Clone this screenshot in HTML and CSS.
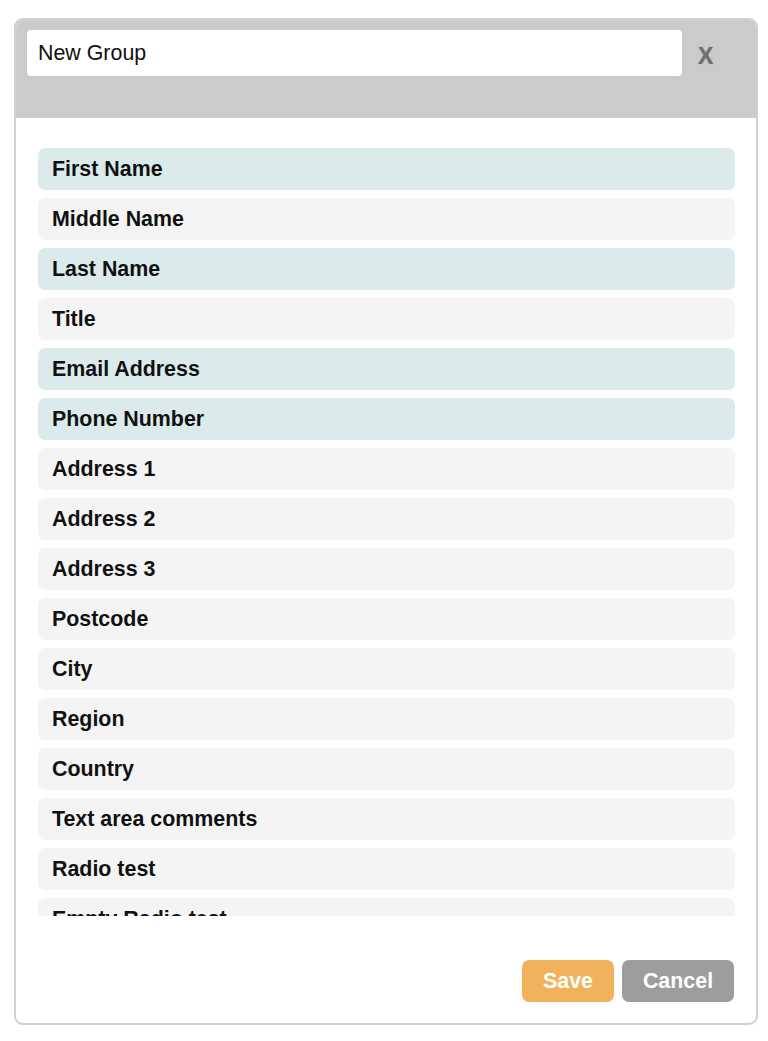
FILE: index.html
```html
<!DOCTYPE html>
<html lang="en">

<head>
    <meta charset="UTF-8">
    <meta name="viewport" content="width=device-width, initial-scale=1.0">
    <title>New Group</title>
    <link rel="stylesheet" href="styles.css">
</head>

<body>
    <div class="dialog">
        <!-- Cabecera: nombre del grupo y cerrar -->
        <div class="dialog-header">
            <input type="text" class="group-name" value="New Group">
            <span class="close">X</span>
        </div>

        <!-- Lista de campos -->
        <div class="field-list">
            <div class="field selected">First Name</div>
            <div class="field">Middle Name</div>
            <div class="field selected">Last Name</div>
            <div class="field">Title</div>
            <div class="field selected">Email Address</div>
            <div class="field selected">Phone Number</div>
            <div class="field">Address 1</div>
            <div class="field">Address 2</div>
            <div class="field">Address 3</div>
            <div class="field">Postcode</div>
            <div class="field">City</div>
            <div class="field">Region</div>
            <div class="field">Country</div>
            <div class="field">Text area comments</div>
            <div class="field">Radio test</div>
            <div class="field">Empty Radio test</div>
        </div>

        <!-- Botones -->
        <div class="actions">
            <button class="save">Save</button>
            <button class="cancel">Cancel</button>
        </div>
    </div>
</body>

</html>
```

FILE: styles.css
```css
body {
    font-family: "Liberation Sans", Arial, sans-serif;
    margin: 0;
    padding: 18px 10px 16px 14px;
    background: #fff;
}

.dialog {
    width: 744px;
    box-sizing: border-box;
    border: 2px solid #d0d0d0;
    border-radius: 9px;
    overflow: hidden;
    background: #fff;
}

.dialog-header {
    height: 98px;
    box-sizing: border-box;
    background: #cbcbcb;
    padding: 10px 0 0 11px;
    display: flex;
    align-items: flex-start;
}

.group-name {
    width: 655px;
    height: 46px;
    box-sizing: border-box;
    border: none;
    border-radius: 4px;
    padding: 0 11px;
    font-family: inherit;
    font-size: 21.4px;
    color: #111;
    background: #fff;
    outline: none;
}

.close {
    margin: 13px 0 0 16px;
    font-size: 23px;
    font-weight: bold;
    color: #6f6f6f;
    line-height: 26px;
    text-shadow: 0 0 1px #8a8a8a;
    cursor: pointer;
}

.field-list {
    height: 798px;
    box-sizing: border-box;
    padding: 30px 21px 0 22px;
    overflow: hidden;
    display: flex;
    flex-direction: column;
    gap: 8px;
}

.field {
    flex: none;
    height: 42px;
    line-height: 42px;
    padding-left: 14px;
    border-radius: 7px;
    background: #f4f4f4;
    font-size: 21.4px;
    font-weight: bold;
    color: #111;
}

.field.selected {
    background: #dbebeb;
}

.actions {
    display: flex;
    justify-content: flex-end;
    gap: 8px;
    padding: 44px 22px 21px 0;
}

.actions button {
    height: 42px;
    border: none;
    border-radius: 7px;
    font-family: inherit;
    font-size: 21.4px;
    font-weight: bold;
    color: #fff;
    cursor: pointer;
}

.actions button.save {
    width: 92px;
    background: #f2b25c;
}

.actions button.cancel {
    width: 112px;
    background: #9d9d9d;
}
```
